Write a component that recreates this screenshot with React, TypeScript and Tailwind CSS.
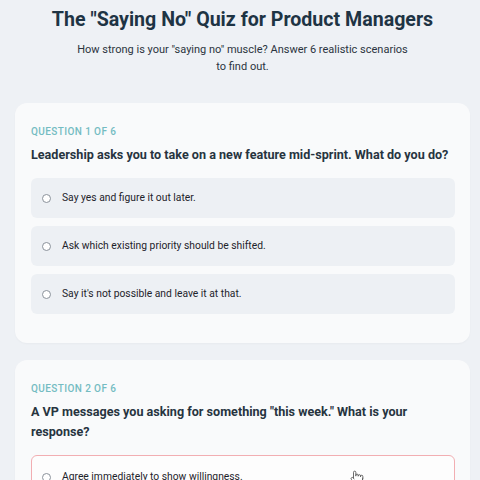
import { Pointer } from "lucide-react";

type Question = {
  label: string;
  text: string;
  options: string[];
};

const questions: Question[] = [
  {
    label: "Question 1 of 6",
    text: "Leadership asks you to take on a new feature mid-sprint. What do you do?",
    options: [
      "Say yes and figure it out later.",
      "Ask which existing priority should be shifted.",
      "Say it's not possible and leave it at that.",
    ],
  },
  {
    label: "Question 2 of 6",
    text: 'A VP messages you asking for something "this week." What is your response?',
    options: [
      "Agree immediately to show willingness.",
      "Clarify the deadline and what it would displace.",
      "Ignore it until the next planning cycle.",
    ],
  },
];

const App = () => {
  return (
    <div className="h-[480px] overflow-hidden bg-[#eef1f5] pl-[15px] pr-[10px] pt-[7px] font-['Roboto',sans-serif] text-[#1f3340]">
      <h1 className="text-center text-[19.6px] font-bold leading-[26px] text-[#1e3444]">
        The "Saying No" Quiz for Product Managers
      </h1>
      <p className="mx-auto mt-[8px] max-w-[336px] text-center text-[11px] leading-[17px] text-[#2b3440]">
        How strong is your "saying no" muscle? Answer 6 realistic scenarios to find out.
      </p>

      <div className="mt-[28px] flex flex-col gap-[17px]">
        {questions.map((q, qi) => (
          <section
            key={q.label}
            className="rounded-[12px] bg-[#f9fafb] pb-[29px] pl-[16px] pr-[15px] pt-[22px] shadow-[0_1px_2px_rgba(15,23,42,0.03)]"
          >
            <p className="text-[10px] font-medium uppercase leading-[14px] tracking-[0.4px] text-[#74bcc2]">
              {q.label}
            </p>
            <h2 className="mt-[6px] text-[12.6px] font-bold leading-[20px] text-[#27343f]">
              {q.text}
            </h2>
            <div className="mt-[13px] flex flex-col gap-[8px]">
              {q.options.map((opt, oi) => {
                const hovered = qi === 1 && oi === 0;
                return (
                  <div
                    key={opt}
                    className={
                      hovered
                        ? "relative flex h-[42px] items-center gap-[11px] rounded-[6px] border-[1.5px] border-[#f2aeb2] bg-[#fdfdfd] pl-[10px] pt-[2px]"
                        : "relative flex h-[40px] items-center gap-[11px] rounded-[6px] bg-[#edf0f4] pl-[11px]"
                    }
                  >
                    <span className="h-[9px] w-[9px] shrink-0 rounded-full border border-[#8b929b] bg-white" />
                    <span className="text-[10.3px] leading-[14px] text-[#1d232b]">{opt}</span>
                    {hovered && (
                      <Pointer
                        className="absolute left-[318px] top-[14px] h-[14px] w-[14px] text-[#555]"
                        strokeWidth={1.5}
                      />
                    )}
                  </div>
                );
              })}
            </div>
          </section>
        ))}
      </div>
    </div>
  );
};

export default App;
